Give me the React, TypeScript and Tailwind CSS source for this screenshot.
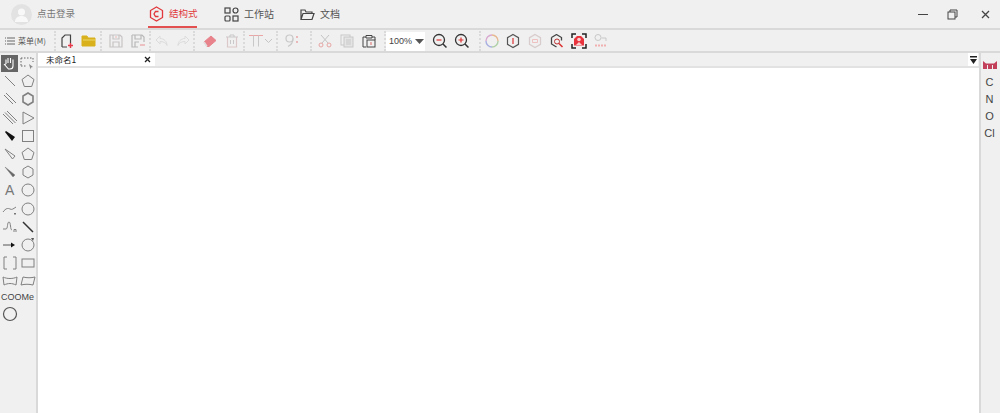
import React from 'react';

const font = { fontFamily: '"Noto Sans CJK SC", "Noto Sans", sans-serif' };

const Svg = ({ children, size = 16, className = '' }: { children: React.ReactNode; size?: number; className?: string }) => (
  <svg width={size} height={size} viewBox="0 0 16 16" fill="none" stroke="currentColor" strokeWidth="1" className={className}>
    {children}
  </svg>
);

const Sep = ({ className = '' }: { className?: string }) => (
  <div className={`h-[20px] w-0 border-l-2 border-dotted border-[#dadada] ${className}`} />
);

const Tool = ({ children, w = 'w-[22px]' }: { children: React.ReactNode; w?: string }) => (
  <div className={`${w} flex shrink-0 items-center justify-center`}>{children}</div>
);

const toolbarPale = 'text-[#c8c8c8]';

const Toolbar = () => (
  <div className="flex h-[23px] shrink-0 items-center border-b-2 border-[#d9d9d9] bg-[#f0f0f0] pt-[1px] text-[#444]">
    <div className="flex w-[54px] shrink-0 items-center pl-[5px] text-[8px] leading-none text-[#555]">
      <svg width="10" height="8" viewBox="0 0 10 8" stroke="#666" className="mr-[3px]">
        <path d="M0 1h1M2 1h8M0 4h1M2 4h8M0 7h1M2 7h8" />
      </svg>
      菜单(M)
    </div>
    <Sep />
    <Tool>
      <Svg>
        <path d="M3 14V5l3-3h5.500v8M3 14h5" stroke="#444" strokeWidth="1.200" />
        <path d="M9 12.500h5M11.500 10v5" stroke="#e53a4a" strokeWidth="1.500" />
      </Svg>
    </Tool>
    <Tool>
      <Svg>
        <path d="M1 3h5l1 2h7v8H1z" fill="#d8b11c" stroke="#d8b11c" />
        <path d="M2 7h12" stroke="#efd76a" />
      </Svg>
    </Tool>
    <Sep className="mr-[3px]" />
    <Tool>
      <Svg className={toolbarPale}>
        <path d="M2 2h10l2 2v10H2zM5 2v4h6V2M5 14V9h6v5" stroke="#c8c4c4" strokeWidth="1.200" />
        <path d="M8 3v2" stroke="#eeb8b8" />
      </Svg>
    </Tool>
    <Tool>
      <Svg className="text-[#b8b8b8]">
        <path d="M2 2h10l2 2v5M2 2v12h6M5 2v4h6V2M5 14V9h4" strokeWidth="1.200" />
        <path d="M10 12h5" stroke="#eaa0a0" strokeWidth="1.200" />
      </Svg>
    </Tool>
    <Sep />
    <Tool w="w-[21px]">
      <Svg className="text-[#dcdcdc]">
        <path d="M6 3 2 7l4 4V8.500c3 0 6 1 7 4 0-4-3-7-7-7z" />
      </Svg>
    </Tool>
    <Tool w="w-[21px]">
      <Svg className="text-[#dcdcdc]">
        <path d="m10 3 4 4-4 4V8.500c-3 0-6 1-7 4 0-4 3-7 7-7z" />
      </Svg>
    </Tool>
    <Sep className="mr-[4px]" />
    <Tool>
      <Svg>
        <path d="M2 9 9 3 14 7.500 7 13.500H5z" fill="#e8838c" stroke="#e8838c" />
        <path d="M2 9l3 4.500" stroke="#e0e0e0" strokeWidth="1.500" />
      </Svg>
    </Tool>
    <Tool>
      <Svg className={toolbarPale}>
        <path d="M2 4h12M6 4V2h4v2" />
        <path d="M3.500 4v10h9V4" stroke="#dcc8c8" strokeWidth="1.200" />
        <path d="M6.500 7v4M9.500 7v4" />
      </Svg>
    </Tool>
    <Sep />
    <Tool w="w-[31px]">
      <div className={`flex items-center ${toolbarPale}`}>
        <Svg>
          <path d="M1 2.500h14" stroke="#eaa5a5" />
          <path d="M5.500 2.500v11M10.500 2.500v11" stroke="#c8c8c8" />
        </Svg>
        <svg width="9" height="6" viewBox="0 0 9 6" stroke="#c4c4c4" fill="none">
          <path d="m1 1 3.500 3.500L8 1" />
        </svg>
      </div>
    </Tool>
    <Sep />
    <Tool w="w-[28px]">
      <Svg className={toolbarPale}>
        <circle cx="5.500" cy="5.500" r="3.500" strokeWidth="1.200" />
        <path d="M9 5.500c0 4-3 7-5 8" strokeWidth="1.200" />
        <path d="M12 4h2M12 9h2" stroke="#e8a5a5" strokeWidth="1.500" />
      </Svg>
    </Tool>
    <Sep className="ml-[4px] mr-[2px]" />
    <Tool>
      <Svg className="text-[#e8a5a5]">
        <circle cx="4" cy="12" r="2" />
        <circle cx="12" cy="12" r="2" />
        <path d="m5 10 7-8M11 10 4 2" stroke="#c4c4c4" />
      </Svg>
    </Tool>
    <Tool>
      <Svg className={toolbarPale}>
        <rect x="2" y="2" width="9" height="10" />
        <rect x="5" y="4" width="9" height="10" fill="#e4e4e4" />
        <path d="M7 7h5M7 9h5M7 11h5" />
      </Svg>
    </Tool>
    <Tool w="w-[21px]">
      <Svg className="text-[#444]">
        <path d="M5 4H2v10h3M11 4h3v3" />
        <path d="M5 2.500h6V5H5z" />
        <rect x="6" y="7" width="8" height="7" />
        <path d="M10 9v3" stroke="#d66" />
      </Svg>
    </Tool>
    <Sep className="ml-[5px]" />
    <div className="mr-[4px] flex h-[19px] w-[39px] shrink-0 items-center justify-between bg-white pl-[3px] pr-[1px] text-[9px] leading-none text-[#444]" style={{ fontFamily: '"Liberation Sans", sans-serif' }}>
      100%
      <svg width="9" height="5" viewBox="0 0 9 5" fill="#555">
        <path d="M0 0h9L4.500 5z" />
      </svg>
    </div>
    <Tool w="w-[22px]">
      <Svg className="text-[#333]">
        <circle cx="7" cy="7" r="5.500" strokeWidth="1.300" />
        <path d="m11 11 3.500 3.500" strokeWidth="1.500" />
        <path d="M4.500 7h5" stroke="#d33" strokeWidth="1.200" />
      </Svg>
    </Tool>
    <Tool w="w-[22px]">
      <Svg className="text-[#333]">
        <circle cx="7" cy="7" r="5.500" strokeWidth="1.300" />
        <path d="m11 11 3.500 3.500" strokeWidth="1.500" />
        <path d="M4.500 7h5M7 4.500v5" stroke="#d33" strokeWidth="1.200" />
      </Svg>
    </Tool>
    <Sep className="ml-[6px]" />
    <Tool w="w-[21px]">
      <svg width="14" height="14" viewBox="0 0 14 14" fill="none" strokeWidth="1.400">
        <path d="M7 1a6 6 0 0 1 6 6" stroke="#e8b890" />
        <path d="M13 7a6 6 0 0 1-6 6" stroke="#b0d0a8" />
        <path d="M7 13a6 6 0 0 1-6-6" stroke="#a8b0e0" />
        <path d="M1 7a6 6 0 0 1 6-6" stroke="#d8a8d0" />
      </svg>
    </Tool>
    <Tool>
      <Svg className="text-[#555]">
        <path d="m8 1.500 5.500 3.200v6.600L8 14.500l-5.500-3.200V4.700z" strokeWidth="1.200" />
        <path d="M8 5v6" stroke="#d33" strokeWidth="1.200" />
      </Svg>
    </Tool>
    <Tool>
      <Svg className="text-[#d8cccc]">
        <path d="m8 1.500 5.500 3.200v6.600L8 14.500l-5.500-3.200V4.700z" strokeWidth="1.300" />
        <path d="M5.500 6.500h5v3h-5z" stroke="#eec0c0" />
      </Svg>
    </Tool>
    <Tool>
      <Svg className="text-[#444]">
        <path d="m7.500 1.500 5 3v3M2.500 4.500v6.500l5 3M2.500 4.500l5-3" strokeWidth="1.300" />
        <circle cx="8" cy="8.500" r="2.500" stroke="#b33" />
        <path d="m10 10.500 3.500 3.500" stroke="#d33" strokeWidth="1.600" />
      </Svg>
    </Tool>
    <Tool>
      <svg width="16" height="16" viewBox="0 0 16 16" fill="none">
        <path d="M1 5V1h4M11 1h4v4M15 11v4h-4M5 15H1v-4" stroke="#222" strokeWidth="1.500" />
        <path d="M3 12.500V6l3-3h4l3 3v6.500z" fill="#e8323c" />
        <circle cx="8" cy="6.500" r="1.800" fill="#f9d0d0" />
        <path d="M5 12l3-3 3 3z" fill="#f9d0d0" />
      </svg>
    </Tool>
    <Tool>
      <svg width="16" height="16" viewBox="0 0 16 16" fill="none">
        <circle cx="5" cy="4.500" r="3" stroke="#c8c8c8" />
        <path d="M8.500 5H13v3" stroke="#c8c8c8" />
        <path d="M2 12.500h12" stroke="#f0b0b0" strokeWidth="2" strokeDasharray="2 1" />
      </svg>
    </Tool>
  </div>
);

const s = '#808080';
const Hex = () => <path d="m8 2 5 3v6l-5 3-5-3V5z" stroke={s} />;
const Pent = () => <path d="m8 2 6 4.500-2.300 7H4.300L2 6.500z" stroke={s} />;
const Circle = () => <circle cx="8" cy="8" r="6" stroke={s} />;

const leftTools: React.ReactNode[][] = [
  [
    <div key="h" className="flex h-[17px] w-[17px] items-center justify-center bg-[#666]">
      <svg width="13" height="14" viewBox="0 0 13 14" fill="none" stroke="#fff" strokeWidth="1.100">
        <path d="M3 8V3.500M5 7V2M7.500 7V2M10 7.500V3.500M10 6.500v3.500a3 3 0 0 1-3 3H5.500L1.500 8.500 3 8" />
      </svg>
    </div>,
    <Svg key="s"><path d="M1 3h11M1 11h6M1 3v8M13 3v4" stroke="#666" strokeDasharray="1.500 1.500" /><path d="M9 9l4 3-2 .5-.5 2z" fill="#888" stroke="none" /></Svg>,
  ],
  [<Svg key="a"><path d="m3 3 10 10" stroke={s} /></Svg>, <Svg key="b"><Pent /></Svg>],
  [<Svg key="a"><path d="m2 4 9 9M4 2l10 10" stroke={s} /></Svg>, <Svg key="b"><path d="m8 2 5 3v6l-5 3-5-3V5z" stroke={s} strokeWidth="1.600" /></Svg>],
  [<Svg key="a"><path d="m1 4 10 10M3 2.500l10.500 10.500M5 1l10 10" stroke={s} /></Svg>, <Svg key="b"><path d="M3 2v12l11-6z" stroke={s} /></Svg>],
  [<Svg key="a"><path d="m3 4 1-1 9 6-3 4z" fill="#111" stroke="none" /></Svg>, <Svg key="b"><rect x="2.500" y="2.500" width="11" height="11" stroke={s} /></Svg>],
  [<Svg key="a"><path d="m3 3 10 7-2.500 3z" stroke={s} /></Svg>, <Svg key="b"><Pent /></Svg>],
  [<Svg key="a"><path d="m3 3 10 8-2 2z" fill="#666" stroke={s} strokeWidth="0.500" /></Svg>, <Svg key="b"><Hex /></Svg>],
  [<span key="a" className="text-[14px] leading-none text-[#777]" style={{ fontFamily: '"Liberation Sans", sans-serif' }}>A</span>, <Svg key="b"><Circle /></Svg>],
  [<Svg key="a"><path d="M1 11c3-4 5-4 7-3s3 0 6-2" stroke={s} /><path d="M12 12h2v1.500h-2z" fill="#777" stroke="none" /></Svg>, <Svg key="b"><Circle /></Svg>],
  [<Svg key="a"><path d="M1 10h3c2 0 1-7 3-7s1 8 3 8M12 13v-2.500h2V13" stroke={s} /></Svg>, <Svg key="b"><path d="m3 3 10 10" stroke="#333" strokeWidth="1.500" /></Svg>],
  [<Svg key="a"><path d="M1 8h9" stroke="#555" /><path d="m9 5.500 4 2.500-4 2.500z" fill="#111" stroke="none" /></Svg>, <Svg key="b"><Circle /><path d="m11 1 2 3 1-3z" fill="#555" stroke="none" /></Svg>],
  [<Svg key="a"><path d="M5 2H2v12h3M11 2h3v12h-3" stroke={s} /></Svg>, <Svg key="b"><rect x="2" y="4" width="12" height="8" stroke={s} /></Svg>],
  [<Svg key="a"><path d="M1 4c4 2 10 2 14 0l-1 8c-4-2-8-2-12 0z" stroke={s} /></Svg>, <Svg key="b"><path d="M3 4c4 1 8 1 12 0l-2 8c-4-1-8-1-12 0z" stroke={s} /></Svg>],
];

const LeftPanel = () => (
  <aside className="flex w-[38px] shrink-0 flex-col border-r-2 border-[#d9d9d9] bg-[#f0f0f0] pt-[1px]">
    {leftTools.map((row, i) => (
      <div key={i} className="flex h-[18.200px] items-center pl-[0.500px]">
        {row.map((cell, j) => (
          <div key={j} className="flex w-[18.500px] shrink-0 justify-center">{cell}</div>
        ))}
      </div>
    ))}
    <div className="h-[15px] pl-[1px] text-[9px] leading-[15px] text-[#444]" style={{ fontFamily: '"Liberation Sans", sans-serif' }}>COOMe</div>
    <div className="pl-[2px] pt-[1px]">
      <svg width="16" height="16" viewBox="0 0 16 16" fill="none">
        <circle cx="8" cy="8" r="6.500" stroke="#555" strokeWidth="1.200" />
      </svg>
    </div>
  </aside>
);

const elements = ['C', 'N', 'O', 'Cl'];

const RightPanel = () => (
  <aside className="flex w-[21px] shrink-0 flex-col items-center border-l-2 border-[#d9d9d9] bg-[#f0f0f0] pr-[2px] pt-[7px]">
    <svg width="14" height="10" viewBox="0 0 14 10" className="mb-[4px]">
      <path d="M0 1 3 3.500h8L14 1v8H0z" fill="#c2405a" />
      <path d="M4.500 5v4M9.500 5v4" stroke="#f0f0f0" />
    </svg>
    {elements.map((el) => (
      <div key={el} className="flex h-[17px] items-center text-[11px] leading-none text-[#444]" style={{ fontFamily: '"Liberation Sans", sans-serif' }}>
        {el}
      </div>
    ))}
  </aside>
);

export default function App() {
  return (
    <div className="flex h-[413px] w-[1000px] flex-col overflow-hidden bg-white" style={font}>
      {/* title bar */}
      <header className="flex h-[30px] shrink-0 items-center border-b-2 border-[#d9d9d9] bg-[#f0f0f0]">
        <div className="ml-[11px] flex h-[21px] w-[21px] items-center justify-center overflow-hidden rounded-full bg-[#e2e2e2]">
          <svg width="15" height="15" viewBox="0 0 15 15" fill="#f8f8f8">
            <circle cx="7.500" cy="5" r="3.500" />
            <path d="M1 15c0-4 3-6 6.500-6s6.500 2 6.500 6z" />
          </svg>
        </div>
        <span className="ml-[5px] whitespace-nowrap text-[9.500px] leading-none text-[#777]">点击登录</span>
        <div className="ml-[73px] flex h-[28px] w-[49px] items-center border-b-2 border-[#e25050] pt-[1px]">
          <svg width="15" height="16" viewBox="0 0 15 16" fill="none" stroke="#e0383c" strokeWidth="1.300" className="ml-[1px] shrink-0">
            <path d="m7.500 1 6 3.500v7l-6 3.500-6-3.500v-7z" />
            <path d="M9.500 5.500h-3L5 8l1.500 2.500h3" />
          </svg>
          <span className="ml-[5px] whitespace-nowrap text-[9.500px] leading-none text-[#e0383c]">结构式</span>
        </div>
        <div className="ml-[27px] flex items-center">
          <svg width="15" height="15" viewBox="0 0 15 15" fill="none" stroke="#444" strokeWidth="1.200">
            <rect x="1" y="1" width="5" height="5" />
            <rect x="9" y="1" width="5" height="5" rx="2.500" />
            <rect x="1" y="9" width="5" height="5" rx="1" />
            <rect x="9" y="9" width="5" height="5" />
          </svg>
          <span className="ml-[5px] whitespace-nowrap text-[10px] leading-none text-[#555]">工作站</span>
        </div>
        <div className="ml-[26px] flex items-center">
          <svg width="15" height="13" viewBox="0 0 15 13" fill="none" stroke="#444" strokeWidth="1.200">
            <path d="M1 11V2h4l1 2h6v1.500M1 11.500l2-6h11l-2 6z" />
          </svg>
          <span className="ml-[5px] whitespace-nowrap text-[10px] leading-none text-[#555]">文档</span>
        </div>
        <div className="ml-auto flex items-center text-[#444]">
          <svg width="10" height="10" viewBox="0 0 10 10" stroke="currentColor" className="mr-[19px]">
            <path d="M0 5.500h10" />
          </svg>
          <svg width="11" height="11" viewBox="0 0 11 11" fill="none" stroke="currentColor" className="mr-[23px]">
            <rect x="1" y="3" width="7" height="7" />
            <path d="M3 3V1h7v7H8" />
          </svg>
          <svg width="9" height="9" viewBox="0 0 9 9" stroke="currentColor" strokeWidth="1.300" className="mr-[10px]">
            <path d="m1 1 7 7M8 1 1 8" />
          </svg>
        </div>
      </header>

      <Toolbar />

      <div className="flex min-h-0 flex-1">
        <LeftPanel />
        <main className="flex min-w-0 flex-1 flex-col bg-white">
          {/* tab strip */}
          <div className="flex h-[15px] shrink-0 items-stretch border-b-2 border-[#e2e2e2] bg-[#f0f0f0]">
            <div className="flex w-[117px] items-center justify-between bg-white pl-[8px] pr-[4px] text-[8.500px] leading-none text-[#222]">
              未命名1
              <svg width="7" height="7" viewBox="0 0 7 7" stroke="#222" strokeWidth="1.300">
                <path d="m1 1 5 5M6 1 1 6" />
              </svg>
            </div>
            <div className="ml-auto mr-[1px] flex w-[10px] items-center justify-center bg-white">
              <svg width="7" height="8" viewBox="0 0 7 8" fill="#222">
                <path d="M0 0h7v1.500H0zM0 3h7L3.500 8z" />
              </svg>
            </div>
          </div>
          <div className="flex-1 bg-white" />
        </main>
        <RightPanel />
      </div>
    </div>
  );
}
